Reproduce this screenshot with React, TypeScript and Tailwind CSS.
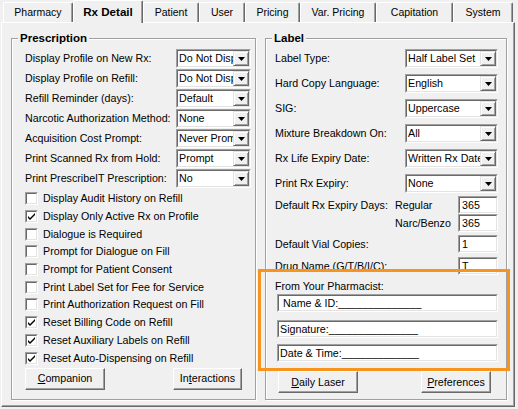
import React from 'react';

const FONT = "font-['Liberation_Sans',Arial,sans-serif]";

function Arrow() {
  return (
    <svg width="7" height="4" viewBox="0 0 7 4">
      <path d="M0 0h7L3.5 4z" fill="#000" />
    </svg>
  );
}

function Sunken({ className = '', inner = '', children }: { className?: string; inner?: string; children?: React.ReactNode }) {
  return (
    <div className={`border border-t-[#a0a0a0] border-l-[#a0a0a0] border-r-white border-b-white ${className}`}>
      <div className={`flex h-full w-full border border-t-[#696969] border-l-[#696969] border-r-[#e3e3e3] border-b-[#e3e3e3] bg-white ${inner}`}>
        {children}
      </div>
    </div>
  );
}

function Combo({ value, className }: { value: string; className: string }) {
  return (
    <Sunken className={`h-[19px] shrink-0 ${className}`}>
      <span className="flex-1 overflow-hidden whitespace-nowrap pl-[1px] leading-[15px]">{value}</span>
      <span className="flex w-[16px] shrink-0 items-center justify-center border border-t-[#e3e3e3] border-l-[#e3e3e3] border-r-[#696969] border-b-[#696969] bg-[#f0f0f0] shadow-[inset_1px_1px_0_#fff,inset_-1px_-1px_0_#a0a0a0]">
        <Arrow />
      </span>
    </Sunken>
  );
}

function Field({ value, className = '', pad = 'pl-[2px]' }: { value: string; className?: string; pad?: string }) {
  return (
    <Sunken className={`h-[18px] shrink-0 ${className}`}>
      <span className={`flex-1 overflow-hidden whitespace-nowrap leading-[14px] ${pad}`}>{value}</span>
    </Sunken>
  );
}

function Btn({ children, className }: { children: React.ReactNode; className: string }) {
  return (
    <button className={`flex h-[22px] items-center justify-center border border-t-white border-l-white border-r-[#696969] border-b-[#696969] bg-[#f0f0f0] shadow-[inset_-1px_-1px_0_#a0a0a0] ${className}`}>
      {children}
    </button>
  );
}

function Check({ checked, label }: { checked?: boolean; label: string }) {
  return (
    <div className="flex h-[17.7px] items-center">
      <Sunken className="h-[13px] w-[13px] shrink-0" inner="items-center justify-center">
        {checked && (
          <svg width="7" height="7" viewBox="0 0 7 7">
            <path d="M0 3l2 2 5-5v2l-5 5-2-2z" fill="#000" />
          </svg>
        )}
      </Sunken>
      <span className="ml-[5px] whitespace-nowrap">{label}</span>
    </div>
  );
}

function Group({ title, className, children }: { title: string; className: string; children: React.ReactNode }) {
  return (
    <div className={`relative border border-[#a0a0a0] shadow-[inset_1px_1px_0_#fff,1px_1px_0_#fff] ${className}`}>
      <span className="absolute -top-[8px] left-[6px] bg-[#f0f0f0] px-[2px] text-[11.5px] font-bold leading-[14px]">{title}</span>
      {children}
    </div>
  );
}

const tabs = [
  { name: 'Pharmacy', w: 'w-[70px]' },
  { name: 'Rx Detail', w: 'w-[70px]', active: true },
  { name: 'Patient', w: 'w-[56px]' },
  { name: 'User', w: 'w-[46px]' },
  { name: 'Pricing', w: 'w-[55px]' },
  { name: 'Var. Pricing', w: 'w-[76px]' },
  { name: 'Capitation', w: 'w-[77px]' },
  { name: 'System', w: 'w-[60px]' },
];

const rxRows = [
  ['Display Profile on New Rx:', 'Do Not Display'],
  ['Display Profile on Refill:', 'Do Not Display'],
  ['Refill Reminder (days):', 'Default'],
  ['Narcotic Authorization Method:', 'None'],
  ['Acquisition Cost Prompt:', 'Never Prompt'],
  ['Print Scanned Rx from Hold:', 'Prompt'],
  ['Print PrescribeIT Prescription:', 'No'],
];

const checks: [string, boolean][] = [
  ['Display Audit History on Refill', false],
  ['Display Only Active Rx on Profile', true],
  ['Dialogue is Required', false],
  ['Prompt for Dialogue on Fill', false],
  ['Prompt for Patient Consent', false],
  ['Print Label Set for Fee for Service', false],
  ['Print Authorization Request on Fill', false],
  ['Reset Billing Code on Refill', true],
  ['Reset Auxiliary Labels on Refill', true],
  ['Reset Auto-Dispensing on Refill', true],
];

const labelRows = [
  ['Label Type:', 'Half Label Set'],
  ['Hard Copy Language:', 'English'],
  ['SIG:', 'Uppercase'],
  ['Mixture Breakdown On:', 'All'],
  ['Rx Life Expiry Date:', 'Written Rx Date'],
  ['Print Rx Expiry:', 'None'],
];

export default function App() {
  return (
    <div className={`relative h-[409px] w-[518px] overflow-hidden bg-[#f0f0f0] text-[10.7px] leading-[13px] text-black ${FONT}`}>
      {/* tab strip */}
      <div className="flex h-[22px] items-end pl-[3px]">
        {tabs.map((t) =>
          t.active ? (
            <div
              key={t.name}
              className={`relative z-10 -mb-[1px] flex h-[23px] ${t.w} items-center justify-center rounded-t-[2px] border border-b-0 border-t-white border-l-white border-r-[#696969] bg-[#f0f0f0] pb-[1px] text-[11.6px] font-bold shadow-[inset_-1px_0_0_#a0a0a0]`}
            >
              {t.name}
            </div>
          ) : (
            <div
              key={t.name}
              className={`flex h-[20px] ${t.w} items-center justify-center rounded-t-[2px] border border-b-0 border-t-white border-l-white border-r-[#696969] text-[10.5px] shadow-[inset_-1px_0_0_#a0a0a0]`}
            >
              {t.name}
            </div>
          )
        )}
      </div>

      {/* tab panel */}
      <div className="ml-[1px] flex h-[385px] w-[514px] gap-[9px] border border-t-white border-l-white border-r-[#696969] border-b-[#696969] pl-[9px] pt-[15px] shadow-[inset_-1px_-1px_0_#a0a0a0]">
        <Group title="Prescription" className="h-[362px] w-[245px] pl-[13px] pr-[4px] pt-[10px]">
          <div className="flex flex-col">
            {rxRows.map(([l, v]) => (
              <div key={l} className="flex h-[20px] items-start">
                <span className="w-[151px] whitespace-nowrap pt-[3px]">{l}</span>
                <Combo value={v} className="w-[75px]" />
              </div>
            ))}
          </div>
          <div className="mt-[1px] flex flex-col">
            {checks.map(([l, c]) => (
              <Check key={l} label={l} checked={c} />
            ))}
          </div>
          <div className="mt-[1px] flex justify-between pr-[9px]">
            <Btn className="w-[80px]">
              <span><u>C</u>ompanion</span>
            </Btn>
            <Btn className="w-[69px]">
              <span>In<u>t</u>eractions</span>
            </Btn>
          </div>
        </Group>

        <Group title="Label" className="h-[362px] w-[242px] pl-[9px] pr-[8px] pt-[10px]">
          <div className="flex flex-col gap-[6px]">
            {labelRows.map(([l, v]) => (
              <div key={l} className="flex h-[19px] items-center">
                <span className="w-[130px] whitespace-nowrap">{l}</span>
                <Combo value={v} className="w-[93px]" />
              </div>
            ))}
          </div>
          <div className="mt-[3px] flex h-[18px] items-center">
            <span className="w-[120px] whitespace-nowrap">Default Rx Expiry Days:</span>
            <span className="w-[63px]">Regular</span>
            <Field value="365" className="w-[40px]" />
          </div>
          <div className="flex h-[18px] items-center">
            <span className="w-[120px]" />
            <span className="w-[63px]">Narc/Benzo</span>
            <Field value="365" className="w-[40px]" />
          </div>
          <div className="mt-[3px] flex h-[18px] items-center">
            <span className="w-[183px] whitespace-nowrap">Default Vial Copies:</span>
            <Field value="1" className="w-[40px]" />
          </div>
          <div className="mt-[4px] flex h-[18px] items-center">
            <span className="w-[183px] whitespace-nowrap">Drug Name (G/T/B/I/C):</span>
            <Field value="T" className="w-[40px]" />
          </div>
          <div className="mt-[4px] h-[14px] leading-[14px]">From Your Pharmacist:</div>
          <div className="ml-[2px] flex flex-col">
            <Field value="Name & ID:______________" pad="pl-[4px]" className="mt-[1px] w-[221px]" />
            <Field value="Signature:_______________" pad="pl-[1px]" className="mt-[8px] w-[221px]" />
            <Field value="Date & Time:_____________" pad="pl-[1px]" className="mt-[6px] w-[221px]" />
          </div>
          <div className="mt-[9px] flex justify-between pl-[3px] pr-[7px]">
            <Btn className="w-[80px]">
              <span><u>D</u>aily Laser</span>
            </Btn>
            <Btn className="w-[70px]">
              <span><u>P</u>references</span>
            </Btn>
          </div>
        </Group>
      </div>

      {/* orange annotation highlight */}
      <div className="pointer-events-none absolute left-[258px] top-[269px] h-[102px] w-[252px] border-[3px] border-[#f7941d]" />
    </div>
  );
}
